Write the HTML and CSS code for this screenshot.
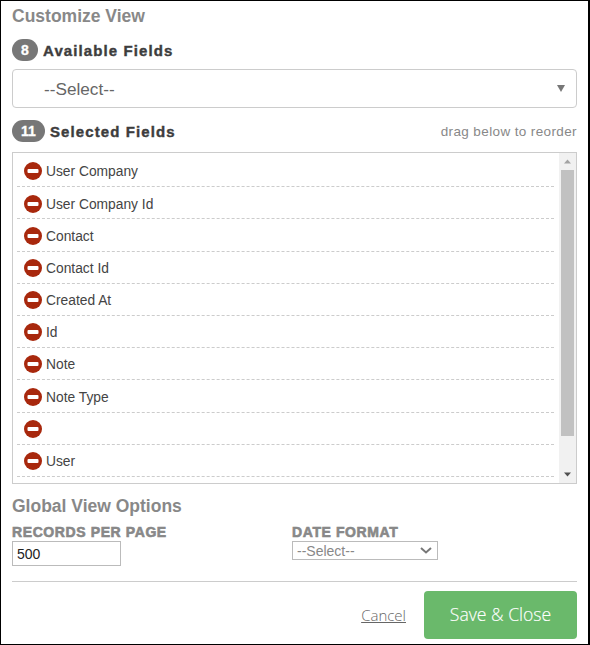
FILE: index.html
```html
<!DOCTYPE html>
<html lang="en">
<head>
<meta charset="utf-8">
<title>Customize View</title>
<link rel="stylesheet" href="styles.css">
</head>
<body>
<main class="modal">
  <h1 class="title">Customize View</h1>
  <div class="field-head first">
    <span class="badge">8</span>
    <h2 class="field-title">Available Fields</h2>
  </div>
  <div class="big-select-wrap">
    <select class="big-select"><option>--Select--</option></select>
    <span class="big-arrow"></span>
  </div>
  <div class="field-head second">
    <span class="badge wide">11</span>
    <h2 class="field-title">Selected Fields</h2>
    <span class="hint">drag below to reorder</span>
  </div>
  <div class="list-box">
    <ul class="list">
      <li class="row"><svg class="minus" viewBox="0 0 18 18"><circle cx="9" cy="9" r="9"/><rect x="3.5" y="7" width="11" height="4" rx="1"/></svg><span class="row-text">User Company</span></li>
      <li class="row"><svg class="minus" viewBox="0 0 18 18"><circle cx="9" cy="9" r="9"/><rect x="3.5" y="7" width="11" height="4" rx="1"/></svg><span class="row-text">User Company Id</span></li>
      <li class="row"><svg class="minus" viewBox="0 0 18 18"><circle cx="9" cy="9" r="9"/><rect x="3.5" y="7" width="11" height="4" rx="1"/></svg><span class="row-text">Contact</span></li>
      <li class="row"><svg class="minus" viewBox="0 0 18 18"><circle cx="9" cy="9" r="9"/><rect x="3.5" y="7" width="11" height="4" rx="1"/></svg><span class="row-text">Contact Id</span></li>
      <li class="row"><svg class="minus" viewBox="0 0 18 18"><circle cx="9" cy="9" r="9"/><rect x="3.5" y="7" width="11" height="4" rx="1"/></svg><span class="row-text">Created At</span></li>
      <li class="row"><svg class="minus" viewBox="0 0 18 18"><circle cx="9" cy="9" r="9"/><rect x="3.5" y="7" width="11" height="4" rx="1"/></svg><span class="row-text">Id</span></li>
      <li class="row"><svg class="minus" viewBox="0 0 18 18"><circle cx="9" cy="9" r="9"/><rect x="3.5" y="7" width="11" height="4" rx="1"/></svg><span class="row-text">Note</span></li>
      <li class="row"><svg class="minus" viewBox="0 0 18 18"><circle cx="9" cy="9" r="9"/><rect x="3.5" y="7" width="11" height="4" rx="1"/></svg><span class="row-text">Note Type</span></li>
      <li class="row"><svg class="minus" viewBox="0 0 18 18"><circle cx="9" cy="9" r="9"/><rect x="3.5" y="7" width="11" height="4" rx="1"/></svg><span class="row-text"></span></li>
      <li class="row"><svg class="minus" viewBox="0 0 18 18"><circle cx="9" cy="9" r="9"/><rect x="3.5" y="7" width="11" height="4" rx="1"/></svg><span class="row-text">User</span></li>
    </ul>
    <div class="scrollbar">
      <svg class="scroll-btn" viewBox="0 0 17 17"><path class="arrow-up" d="M5 10.5 8.5 6.5 12 10.5Z"/></svg>
      <div class="thumb"></div>
      <svg class="scroll-btn" viewBox="0 0 17 17"><path class="arrow-down" d="M5 6.5 8.5 10.5 12 6.5Z"/></svg>
    </div>
  </div>
  <h2 class="options-title">Global View Options</h2>
  <div class="options">
    <div class="option">
      <label class="opt-label" for="rpp">RECORDS PER PAGE</label>
      <input class="rpp" id="rpp" type="text" value="500">
    </div>
    <div class="option">
      <label class="opt-label" for="df">DATE FORMAT</label>
      <div class="date-wrap">
        <select class="date-select" id="df"><option>--Select--</option></select>
        <svg class="chevron" viewBox="0 0 12 7"><path d="M1 1 6 5.5 11 1"/></svg>
      </div>
    </div>
  </div>
  <footer class="footer">
    <a class="cancel" href="#">Cancel</a>
    <button class="save" type="button">Save &amp; Close</button>
  </footer>
</main>
</body>
</html>
```
FILE: styles.css
```css
* { box-sizing: border-box; }
html, body { margin: 0; padding: 0; }
body { width: 590px; height: 645px; background: #fff; font-family: "Liberation Sans", Arial, sans-serif; overflow: hidden; }
.modal { width: 590px; height: 645px; border: 1px solid #000; border-width: 1px 2px 1px 1px; padding: 0 11px 0 11px; display: flex; flex-direction: column; }
.title { margin: 5px 0 0; font-size: 17.5px; line-height: 20px; font-weight: bold; color: #888; }
.field-head { display: flex; align-items: center; height: 22px; }
.field-head.first { margin-top: 13px; }
.field-head.second { margin-top: 12px; }
.badge { background: #777; color: #fff; font-size: 14px; font-weight: bold; -webkit-text-stroke: 0.3px #fff; height: 22px; width: 26px; border-radius: 11px; display: flex; align-items: center; justify-content: center; flex: none; }
.badge.wide { width: 33px; }
.field-title { margin: 1px 0 0 5px; font-size: 15px; font-weight: bold; color: #3d3d3d; letter-spacing: 1.1px; -webkit-text-stroke: 0.4px #3d3d3d; }
.hint { margin-left: auto; font-size: 13.5px; color: #888; letter-spacing: 0.38px; }
.big-select-wrap { position: relative; margin-top: 8px; height: 39px; }
.big-select { appearance: none; width: 100%; height: 39px; background: #fff; border: 1px solid #ccc; border-radius: 4px; padding: 0 31px; font: 17.2px "Liberation Sans", Arial, sans-serif; color: #666; }
.big-arrow { position: absolute; right: 12px; top: 16px; width: 0; height: 0; border-left: 4px solid transparent; border-right: 4px solid transparent; border-top: 7px solid #777; }
.list-box { margin-top: 10px; height: 332px; border: 1px solid #ccc; display: flex; overflow: hidden; }
.list { list-style: none; margin: 0; padding: 2px 5px 0 4px; flex: 1; min-width: 0; }
.row { height: 32.2px; display: flex; align-items: center; gap: 4px; padding: 1.5px 0 0 7px; border-bottom: 1px dashed #ccc; font-size: 13.8px; color: #444; }
.row-text { padding-top: 1px; }
.minus { width: 18px; height: 18px; flex: none; }
.minus circle { fill: #a8280d; }
.minus rect { fill: #fff; }
.scrollbar { width: 17px; flex: none; background: #f1f1f1; display: flex; flex-direction: column; }
.scroll-btn { width: 17px; height: 17px; flex: none; }
.arrow-up { fill: #a3a3a3; }
.arrow-down { fill: #505050; }
.thumb { flex: 0 0 266px; margin: 0 2px 12px; background: #c1c1c1; }
.scrollbar .scroll-btn:last-child { margin-top: auto; }
.options-title { margin: 12px 0 0; font-size: 17.5px; line-height: 20px; font-weight: bold; color: #888; }
.options { display: flex; margin-top: 7px; }
.option { width: 280px; display: flex; flex-direction: column; align-items: flex-start; }
.opt-label { font-size: 14px; line-height: 17px; font-weight: bold; color: #888; letter-spacing: 0.6px; -webkit-text-stroke: 0.6px #888; margin-top: 1px; }
.rpp { width: 109px; height: 25px; border: 1px solid #bbb; padding: 0 4px; font: 14px "Liberation Sans", Arial, sans-serif; color: #222; border-radius: 0; outline: none; }
.date-wrap { position: relative; width: 146px; height: 19px; }
.date-select { appearance: none; width: 146px; height: 19px; border: 1px solid #bbb; background: #fff; font: 14px "Liberation Sans", Arial, sans-serif; color: #888; padding: 0 4px; border-radius: 0; display: block; }
.chevron { position: absolute; right: 6px; top: 6px; width: 12px; height: 7px; }
.chevron path { fill: none; stroke: #777; stroke-width: 2; }
.footer { margin-top: 15px; border-top: 1px solid #ccc; padding-top: 9px; display: flex; justify-content: flex-end; align-items: center; gap: 18px; }
.cancel { font-family: "Open Sans", sans-serif; font-size: 15px; font-weight: 300; color: #666; text-decoration: underline; }
.save { width: 153px; height: 48px; background: #6ab96b; border: 0; border-radius: 4px; padding: 0 0 2px; color: #fff; font-family: "Open Sans", sans-serif; font-size: 17.6px; font-weight: 300; -webkit-text-stroke: 0.15px #fff; }
```
